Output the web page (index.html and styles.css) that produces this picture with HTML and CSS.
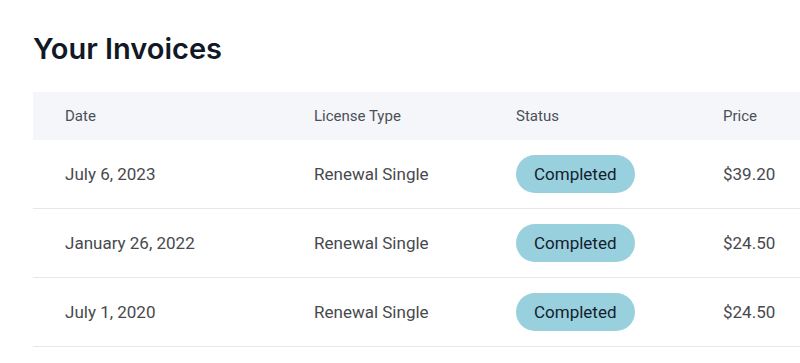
FILE: index.html
```html
<!DOCTYPE html>
<html lang="en">
<head>
  <meta charset="UTF-8" />
  <title>Your Invoices</title>
  <link rel="stylesheet" href="styles.css">
</head>
<body>
  <div class="page">
    <h1>Your Invoices</h1>

    <div class="invoice-table">
      <div class="row head">
        <div class="cell">Date</div>
        <div class="cell">License Type</div>
        <div class="cell">Status</div>
        <div class="cell">Price</div>
      </div>
      <div class="row">
        <div class="cell">July 6, 2023</div>
        <div class="cell">Renewal Single</div>
        <div class="cell"><span class="badge">Completed</span></div>
        <div class="cell">$39.20</div>
      </div>
      <div class="row">
        <div class="cell">January 26, 2022</div>
        <div class="cell">Renewal Single</div>
        <div class="cell"><span class="badge">Completed</span></div>
        <div class="cell">$24.50</div>
      </div>
      <div class="row">
        <div class="cell">July 1, 2020</div>
        <div class="cell">Renewal Single</div>
        <div class="cell"><span class="badge">Completed</span></div>
        <div class="cell">$24.50</div>
      </div>
    </div>
  </div>
</body>
</html>
```

FILE: styles.css
```css
* {
  box-sizing: border-box;
  margin: 0;
  padding: 0;
}

body {
  background: #fff;
  font-family: Roboto, sans-serif;
}

.page {
  padding: 33px 0 0 33px;
}

h1 {
  font-family: Inter, sans-serif;
  font-weight: 600;
  font-size: 29px;
  line-height: 32px;
  color: #121826;
  margin-bottom: 27px;
}

.row {
  display: grid;
  grid-template-columns: 249px 202px 207px 1fr;
  align-items: center;
  height: 69px;
  border-bottom: 1px solid #e6e8eb;
  font-size: 17px;
  color: #47494d;
}

.row.head {
  height: 48px;
  border-bottom: none;
  background: #f5f6f9;
  font-size: 15px;
  color: #4b5058;
}

.cell {
  padding-left: 32px;
  white-space: nowrap;
}

.badge {
  display: inline-block;
  background: #99d0dd;
  color: #13202e;
  border-radius: 19px;
  height: 38px;
  line-height: 38px;
  padding: 0 18px;
  font-size: 17px;
}
```
